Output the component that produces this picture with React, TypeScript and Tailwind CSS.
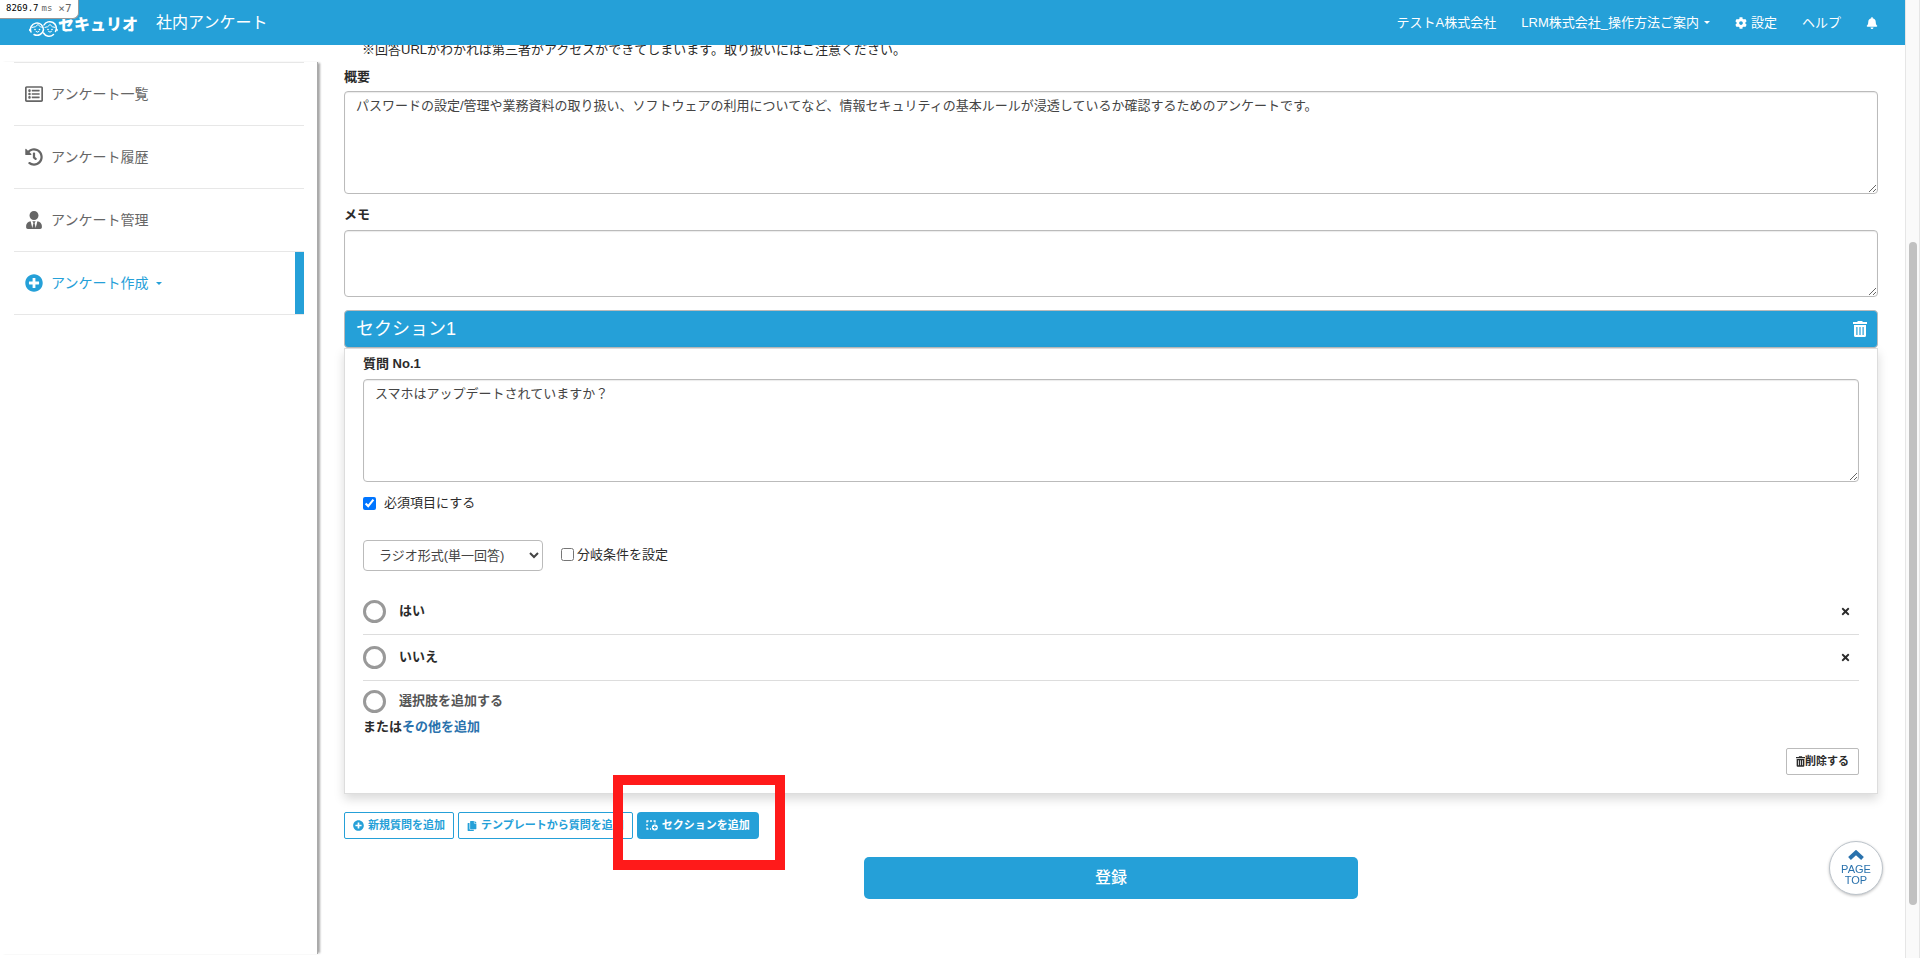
import { useState } from "react";
import type { ReactNode } from "react";
import {
  FaBell,
  FaCog,
  FaCopy,
  FaHistory,
  FaPlusCircle,
  FaRegListAlt,
  FaTimes,
  FaUserTie,
} from "react-icons/fa";

const menuItems = [
  { label: "アンケート一覧", icon: FaRegListAlt },
  { label: "アンケート履歴", icon: FaHistory },
  { label: "アンケート管理", icon: FaUserTie },
  { label: "アンケート作成", icon: FaPlusCircle, active: true },
];

const textareaClass =
  "block w-full rounded-sm border border-[#bbb] bg-white px-[11px] py-1 text-[13px] leading-5 text-[#444] shadow-[inset_0_1px_1px_rgba(0,0,0,0.08)]";

function Caret() {
  return (
    <span className="inline-block border-x-[3px] border-t-[3px] border-x-transparent border-t-current" />
  );
}

function LogoMark() {
  return (
    <svg width="29" height="18" viewBox="0 0 29 18" fill="none" stroke="#fff">
      <g strokeWidth="1.5" strokeLinecap="round">
        <path d="M2 12 A6.500 6.500 0 1 1 14.500 9.500 A6.500 6.500 0 0 1 5 14.500" />
        <path d="M15 5 A6.500 6.500 0 0 1 26.500 11.500 M14.500 13 A6.500 6.500 0 0 0 24.500 14.500" />
        <path d="M3 7.500 q4 0 6-3 q2 3 5 3 M16 7.500 q3 0 5-3 q2 3 5 3" strokeWidth="1" />
        <path d="M7 11.500 q1.500 1.500 3 0 M19.500 11.500 q1.500 1.500 3 0" strokeWidth="1" />
        <path d="M.8 9.500 v1 M28 9.500 v1" />
      </g>
      <g fill="#fff" stroke="none">
        <circle cx="6" cy="9.500" r="0.8" />
        <circle cx="10.500" cy="9.500" r="0.8" />
        <circle cx="19" cy="9.500" r="0.8" />
        <circle cx="23" cy="9.500" r="0.8" />
      </g>
    </svg>
  );
}

function TrashIcon({ className }: { className: string }) {
  return (
    <svg viewBox="0 0 14 16" className={className} fill="currentColor">
      <path d="M4.5 0h5v1H14v2H0V1h4.5z" />
      <path
        fillRule="evenodd"
        d="M1 4h12v10.5a1.5 1.5 0 0 1-1.500 1.500h-9A1.500 1.500 0 0 1 1 14.500zM3.300 6v8h1.200V6zM6.400 6v8h1.200V6zM9.500 6v8h1.200V6z"
      />
    </svg>
  );
}

function AddSectionIcon() {
  return (
    <svg width="12" height="11" viewBox="0 0 12 11" fill="none">
      <path
        d="M1 2.500V1h1.500M4 1h2M7.500 1H9v1.500M1 4v2M1 7.500V9h1.500M4 9h1M9 3.500v.5"
        stroke="currentColor"
        strokeWidth="1.300"
      />
      <circle cx="8.800" cy="7.500" r="3" fill="currentColor" />
      <path d="M8.800 5.700v3.600M7 7.500h3.600" stroke="#25a0d8" strokeWidth="1" />
    </svg>
  );
}

function Header() {
  return (
    <header className="fixed left-0 right-[15px] top-0 z-10 flex h-[45px] items-center bg-[#25a0d8] pl-[29px] pr-[27px] text-white">
      <a href="#" className="flex items-center pt-1">
        <span className="pt-2">
          <LogoMark />
        </span>
        <span className="text-[16px] font-black leading-5">セキュリオ</span>
      </a>
      <h1 className="ml-[18px] text-[16px] leading-5">社内アンケート</h1>
      <nav className="ml-auto flex items-center gap-[25px] text-[13px] leading-5">
        <span>テストA株式会社</span>
        <button className="flex items-center gap-[5px]">
          LRM株式会社_操作方法ご案内
          <Caret />
        </button>
        <a href="#" className="flex items-center gap-1">
          <FaCog className="size-3" />
          設定
        </a>
        <a href="#">ヘルプ</a>
        <button aria-label="通知">
          <FaBell className="size-3" />
        </button>
      </nav>
    </header>
  );
}

function Sidebar() {
  return (
    <aside className="flex w-[318px] shrink-0 flex-col pb-1 pt-[62px]">
      <nav className="flex-1 border-r border-[#aaa] pl-[14px] pr-[13px] shadow-[3px_0_2px_-1px_rgba(0,0,0,0.35)]">
        <ul className="border-t border-[#e7e7e7]">
          {menuItems.map(({ label, icon: Icon, active }) => (
            <li key={label} className="border-b border-[#e7e7e7]">
              <a
                href="#"
                className={`flex h-[62px] items-center gap-2 pl-[11px] text-[14px] leading-5 ${
                  active
                    ? "border-r-[9px] border-[#25a0d8] text-[#25a0d8]"
                    : "text-[#666]"
                }`}
              >
                <Icon className="size-[18px]" />
                <span>{label}</span>
                {active && <Caret />}
              </a>
            </li>
          ))}
        </ul>
      </nav>
    </aside>
  );
}

function OptionRow({ id, label }: { id: string; label: string }) {
  return (
    <div className="flex h-[46px] items-center border-b border-[#ddd]">
      <input
        id={id}
        type="radio"
        name="answer"
        className="size-[23px] appearance-none rounded-full border-[3px] border-[#999] bg-white"
      />
      <label htmlFor={id} className="ml-[13px] pb-[2px] text-[13px] font-bold leading-5">
        {label}
      </label>
      <button aria-label={`${label}を削除`} className="ml-auto mr-2">
        <FaTimes className="size-[11px]" />
      </button>
    </div>
  );
}

function Question() {
  const [required, setRequired] = useState(true);
  const [branch, setBranch] = useState(false);

  return (
    <div className="border border-[#ddd] bg-white px-[18px] pb-[18px] pt-[5px] shadow-[0_5px_10px_rgba(0,0,0,0.15)]">
      <label htmlFor="question" className="mb-[5px] block text-[13px] font-bold leading-5">
        質問 No.1
      </label>
      <textarea
        id="question"
        className={`${textareaClass} h-[103px]`}
        defaultValue="スマホはアップデートされていますか？"
      />
      <label className="mt-[11px] flex items-center gap-2 text-[13px] leading-5">
        <input
          type="checkbox"
          checked={required}
          onChange={(e) => setRequired(e.target.checked)}
          className="size-[13px] accent-[#0075ff]"
        />
        必須項目にする
      </label>
      <div className="mt-[27px] flex items-center gap-[18px]">
        <select
          aria-label="回答形式"
          className="h-[31px] w-[180px] rounded-sm border border-[#bbb] bg-white px-[11px] text-[13px] text-[#444]"
        >
          <option>ラジオ形式(単一回答)</option>
        </select>
        <label className="flex items-center gap-[3px] pb-[2px] text-[13px] leading-5">
          <input
            type="checkbox"
            checked={branch}
            onChange={(e) => setBranch(e.target.checked)}
            className="size-[13px]"
          />
          分岐条件を設定
        </label>
      </div>

      <div className="mt-[18px]">
        <OptionRow id="option-1" label="はい" />
        <OptionRow id="option-2" label="いいえ" />
        <div className="flex h-9 items-center pt-[9px] pb-1">
          <input
            id="option-new"
            type="radio"
            name="answer"
            className="size-[23px] appearance-none rounded-full border-[3px] border-[#999] bg-white"
          />
          <label
            htmlFor="option-new"
            className="ml-[13px] pb-[2px] text-[13px] font-bold leading-5 text-[#555]"
          >
            選択肢を追加する
          </label>
        </div>
      </div>
      <p className="text-[13px] font-bold leading-5">
        または
        <a href="#" className="text-[#2a72ad]">
          その他を追加
        </a>
      </p>
      <div className="mt-[11px] flex justify-end">
        <button className="flex h-[27px] items-center rounded-xs border border-[#bbb] px-[9px] text-[11px] font-bold">
          <TrashIcon className="h-[11px] w-[9px]" />
          削除する
        </button>
      </div>
    </div>
  );
}

function OutlineButton({ children }: { children: ReactNode }) {
  return (
    <button className="flex h-[27px] items-center gap-1 rounded-xs border border-[#25a0d8] bg-white px-2 text-[11px] font-bold text-[#25a0d8]">
      {children}
    </button>
  );
}

export default function App() {
  return (
    <div className="flex min-h-screen bg-white font-['Liberation_Sans','Noto_Sans_CJK_JP',sans-serif] text-[#2b2b2b]">
      <Header />
      {/* render time badge */}
      <div className="fixed left-0 top-0 z-20 flex h-[19px] items-center rounded-br-md border-b border-r border-[#999] bg-white pl-[6px] pr-[6px] font-['DejaVu_Sans_Mono',monospace] text-[9px] text-black">
        8269.7
        <span className="ml-[3px] text-[#666]">ms</span>
        <span className="ml-[6px] text-[11px] text-[#666]">×7</span>
      </div>

      <Sidebar />

      <main className="min-w-0 flex-1 pl-[26px] pr-[27px] pt-10">
        <p className="pl-[18px] text-[13px] leading-5">
          ※回答URLがわかれば第三者がアクセスができてしまいます。取り扱いにはご注意ください。
        </p>
        <label htmlFor="summary" className="mb-1 mt-[7px] block text-[13px] font-bold leading-5">
          概要
        </label>
        <textarea
          id="summary"
          className={`${textareaClass} h-[103px]`}
          defaultValue="パスワードの設定/管理や業務資料の取り扱い、ソフトウェアの利用についてなど、情報セキュリティの基本ルールが浸透しているか確認するためのアンケートです。"
        />
        <label htmlFor="memo" className="mb-[5px] mt-[11px] block text-[13px] font-bold leading-5">
          メモ
        </label>
        <textarea id="memo" className={`${textareaClass} h-[67px]`} />

        <section className="mt-[13px]">
          <div className="flex h-[38px] items-center justify-between rounded-sm border border-[#bbb] bg-[#25a0d8] pl-[11px] pr-[10px] text-white">
            <h2 className="text-[18px] leading-6">セクション1</h2>
            <button aria-label="セクションを削除">
              <TrashIcon className="h-4 w-[14px]" />
            </button>
          </div>
          <Question />
        </section>

        <div className="mt-[18px] flex gap-1">
          <OutlineButton>
            <FaPlusCircle className="size-[11px]" />
            新規質問を追加
          </OutlineButton>
          <OutlineButton>
            <FaCopy className="size-[10px]" />
            テンプレートから質問を追加
          </OutlineButton>
          <div className="relative">
            <button className="flex h-[27px] items-center gap-1 rounded-sm bg-[#25a0d8] px-[9px] text-[11px] font-bold text-white">
              <AddSectionIcon />
              セクションを追加
            </button>
            <div className="pointer-events-none absolute -left-6 -top-[37px] h-[95px] w-[172px] border-[10px] border-[#ff1a1a]" />
          </div>
        </div>

        <div className="mx-auto mt-[18px] w-1/3 px-[9px]">
          <button className="h-[42px] w-full rounded-[5px] bg-[#25a0d8] text-[16px] font-medium text-white">
            登録
          </button>
        </div>
      </main>

      <a
        href="#"
        className="fixed bottom-[63px] right-[37px] flex size-[54px] flex-col items-center rounded-full border border-[#bcc3ca] bg-white pt-2 text-[11px] leading-[11px] text-[#2a72ad] shadow-[0_1px_3px_rgba(0,0,0,0.25)]"
      >
        <svg viewBox="0 0 16 10" className="mb-1 h-[10px] w-4" fill="none">
          <path d="M1.500 8.500 8 2.500l6.500 6" stroke="currentColor" strokeWidth="4" />
        </svg>
        <span>PAGE</span>
        <span>TOP</span>
      </a>

      {/* scroll rail */}
      <div className="w-[15px] shrink-0 border-x border-[#e6e6e6] bg-[#fafafa] px-[3px] pt-[242px]">
        <div className="h-[663px] w-2 rounded-full bg-[#c1c1c1]" />
      </div>
    </div>
  );
}
